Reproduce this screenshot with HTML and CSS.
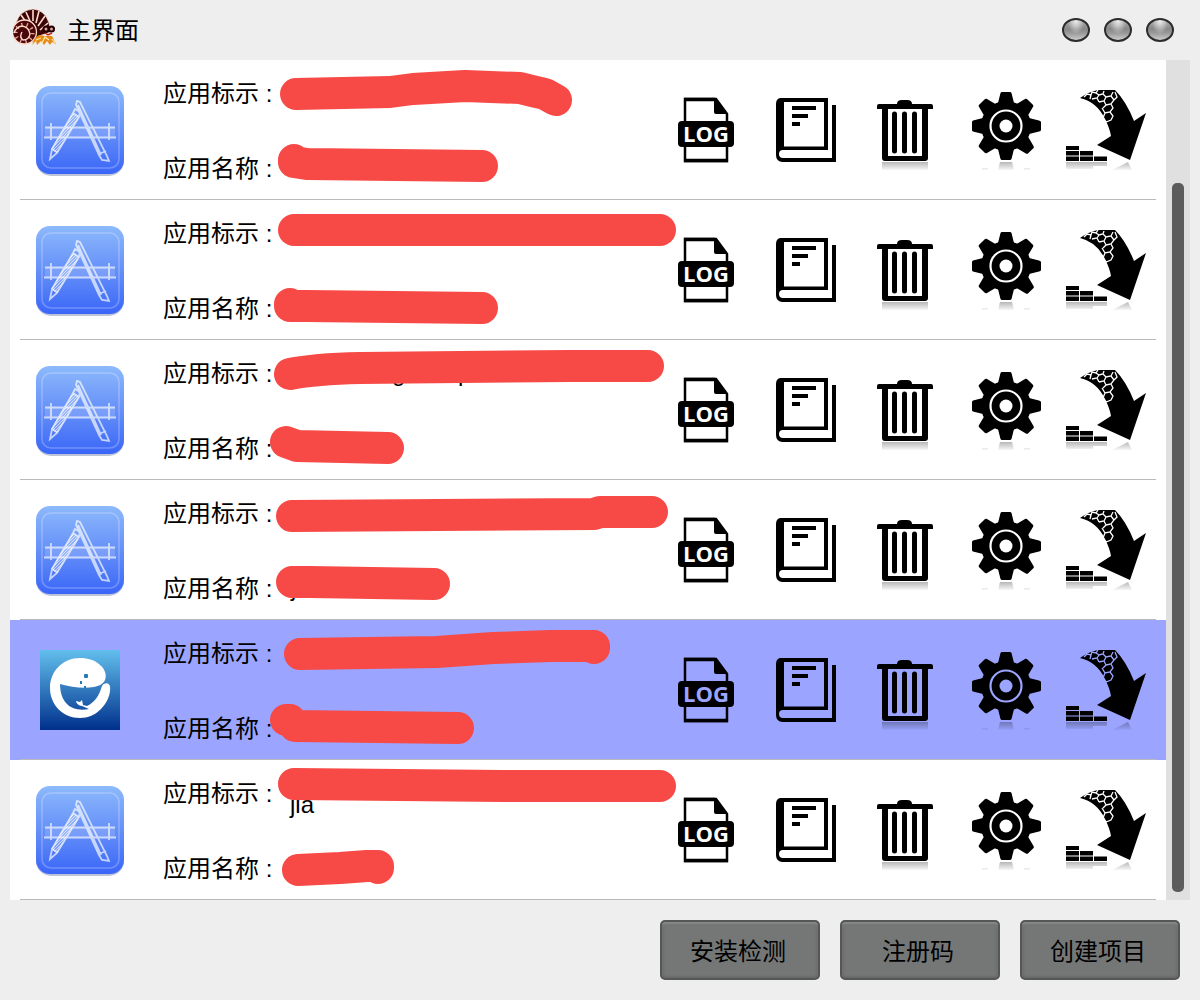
FILE: index.html
```html
<!DOCTYPE html>
<html lang="zh-CN">
<head>
<meta charset="utf-8">
<meta name="viewport" content="width=device-width, initial-scale=1">
<title>主界面</title>
<link rel="stylesheet" href="styles.css">
</head>
<body>
<svg class="sprite" aria-hidden="true">
  <defs>
    <linearGradient id="blueprint" x1="0" y1="0" x2="0" y2="1">
      <stop offset="0" stop-color="#8db9fc"/><stop offset=".5" stop-color="#6590f8"/><stop offset="1" stop-color="#3a66f8"/>
    </linearGradient>
    <linearGradient id="ocean" x1="0" y1="0" x2="0" y2="1">
      <stop offset="0" stop-color="#62bfec"/><stop offset="1" stop-color="#00308c"/>
    </linearGradient>
    <linearGradient id="fade" x1="0" y1="0" x2="0" y2="1">
      <stop offset="0" stop-color="#000" stop-opacity=".28"/><stop offset="1" stop-color="#000" stop-opacity=".03"/>
    </linearGradient>
    <pattern id="hatch" width="3" height="3" patternUnits="userSpaceOnUse">
      <path d="M0 3L3 0" stroke="#fff" stroke-width="1"/>
    </pattern>
  </defs>
  <symbol id="app" viewBox="0 0 100 100">
    <rect x="6" y="7" width="88" height="89" rx="15" fill="#5a6b9c" opacity=".4"/>
    <rect x="6" y="6" width="88" height="88" rx="14" fill="url(#blueprint)"/>
    <rect x="12" y="13" width="77" height="75" rx="9" fill="none" stroke="#fff" stroke-width="1.5" opacity=".25"/>
    <path d="M15 48H85V57H15Z" fill="#fff" opacity=".15"/>
    <g fill="none" stroke="#fff" stroke-width="1.800" opacity=".68">
      <path d="M15 47.500H85M14 57.500H86M21 43V60M79 43V60"/>
      <path d="M46 25l1-4 3 1 27 54 2 5-7-1-3-5zM48 25l23 50M69 74l7-3"/>
      <path d="M43 33l6 4-22 36-7 6 2-10zM43 33l2-4 5 3-1 5M22 69l6 4"/>
    </g>
    <path d="M43 33l6 4-22 36-6-4z" fill="#fff" opacity=".25"/>
    <path d="M43 33l6 4-22 36-6-4z" fill="url(#hatch)" opacity=".6"/>
  </symbol>
  <symbol id="whale" viewBox="0 0 100 100">
    <rect x="10" y="10" width="80" height="80" fill="url(#ocean)"/>
    <g transform="translate(10 10)">
      <path fill="#fff" d="M40 8C48 8 55 10 60 15C65 19 67 25 65 30C63 34 59 36 54 37C43 39 31 37 20 34C20 43 23 54 33 58C38 60 44 60 49 59L42 56C39 56 36 53 36 51L40 52L42 50L43 55L47 56C55 52 59 46 62 36C64 33 68 32 70 36C71 44 67 53 61 59C55 65 48 68 40 68C23 68 10 55 10 38C10 21 23 8 40 8Z"/>
      <rect x="44" y="24" width="4" height="4" rx="1" fill="#277ab8"/><rect x="40" y="31" width="2" height="3" fill="#277ab8"/><rect x="44" y="36" width="2" height="2" fill="#277ab8"/>
    </g>
  </symbol>
  <symbol id="log" viewBox="0 0 80 80">
    <path d="M19 71V9H50L61 24V71Z" fill="none" stroke="#000" stroke-width="2.500"/>
    <path d="M18 9.500H49M18 70.500H62" stroke="#000" stroke-width="3.500"/>
    <path d="M48 8L62 24H50Q48 24 48 22Z"/>
    <rect x="12" y="31" width="56" height="26" rx="4"/>
  </symbol>
  <symbol id="book" viewBox="0 0 80 80">
    <path fill-rule="evenodd" d="M14 8H62V60H17Q13 60 13 64Q13 68 17 68H66V15H70V72H16Q10 71 10 65V14Q10 9 14 8ZM18 12V56.500H58V12Z"/>
    <path d="M26 18H50M26 26H42M26 34H34" stroke="#000" stroke-width="4"/>
  </symbol>
  <symbol id="trash" viewBox="0 0 80 80">
    <path fill-rule="evenodd" d="M31 14Q31 10 36 10H41Q46 10 46 14H65Q67 14 67 16V19H62V68Q62 71 59 71H19Q16 71 16 68V19H11V16Q11 14 13 14ZM22 19V66H56V19Z"/>
    <path d="M28.500 24V61M38.500 24V61M48.500 24V61" stroke="#000" stroke-width="5" stroke-linecap="round"/>
    <path d="M16 72H62V80H16Z" fill="url(#fade)"/>
  </symbol>
  <symbol id="gear" viewBox="0 0 80 80">
    <circle cx="40" cy="36" r="25"/>
    <path id="teeth" d="M32 13L34.500 3Q35 2 36 2H44Q45 2 45.500 3L48 13V59L45.500 69Q45 70 44 70H36Q35 70 34.500 69L32 59ZM17 28L7 30.500Q6 31 6 32V40Q6 41 7 41.500L17 44H63L73 41.500Q75 41 75 40V32Q75 31 73 30.500L63 28Z"/>
    <use href="#teeth" transform="rotate(45 40 36)"/>
    <circle cx="40" cy="36" r="15.500" fill="none" class="cut-line" stroke-width="2.200"/>
    <circle cx="40" cy="36" r="6.500" class="cut-fill"/>
    <path d="M34 72H46L48 80H32ZM16 78h6v2h-6zM58 78h6v2h-6z" fill="url(#fade)"/>
  </symbol>
  <symbol id="arrow" viewBox="0 0 80 80">
    <path d="M14 8Q22 2 32 0H49Q60 11 68 31L80 23L64 70L31 55L45 46Q44 39 39 29Q31 12 14 8Z"/>
    <g fill="none" class="cut-line" stroke-width="1.300">
      <path d="M18 7l3-3 4 1 1-3 4 1 2-3M25 5l-1 4M30 3l3 2 4-1 1-3M33 5l-2 3-5 1M31 8l2 4M37 4l3 3 5-1 2-4M40 7l-2 4-5 1M38 11l2 4-3 3M45 6l3 4-3 4-5 1M45 14l2 4-3 4-5 1-3-5M48 10l3-3-2-5M44 22l3 4-2 4-5 2-3-4 2-5"/>
    </g>
    <path d="M0 56H13V60H0ZM0 61H13V65.500H0ZM14 61H27V65.500H14ZM0 66.500H13V71H0ZM14 66.500H27V71H14ZM28 66.500H41V71H28Z"/>
    <path d="M0 72H41V76H27V79H0ZM62 72L66 80H46Z" fill="url(#fade)"/>
  </symbol>
</svg>

<div class="window">
  <header class="titlebar">
    <svg class="logo" viewBox="0 0 44 38" aria-hidden="true">
      <path d="M3 14Q7 1 20 0Q32 1 36 14L38 23L26 27L20 33L4 33Z" fill="#3c0507" stroke="#ffe3d2" stroke-width=".8"/>
      <path d="M8 6L13 13M13 3L17 12M20 1L20 12M26 2L23 14M32 7L25 17M35 14L27 21" stroke="#ffdccb" stroke-width="1.600"/>
      <circle cx="11.500" cy="23" r="12" fill="#4a0709" stroke="#ffd9cc" stroke-width="1.300"/>
      <circle cx="11" cy="24" r="8.500" fill="none" stroke="#e9a391" stroke-width="4" stroke-dasharray="1.300 4"/>
      <path d="M9 23Q6 28 10 31Q16 31 17 25Q16 18 9 17Q3 18 1 24" fill="none" stroke="#ffd9cc" stroke-width="1.400"/>
      <path d="M19 36L22 29L26 26L32 27L39 27L43 35L39 33L37 36L34 32L31 36L28 32L24 36L23 32Z" fill="#e68a16"/>
      <path d="M23 31L28 29M29 34L32 28L36 31M39 30L42 34" fill="none" stroke="#ffe9a8" stroke-width="1.200"/>
      <circle cx="33" cy="20" r="3.500" fill="#200"/><circle cx="38.500" cy="20" r="3.500" fill="#200"/>
      <circle cx="33" cy="20" r="1.500" fill="#e5a09a"/><circle cx="38.500" cy="20" r="1.500" fill="#e5a09a"/>
      <path d="M32 24L35 26L39 24" fill="none" stroke="#c5281c" stroke-width="1.500"/>
    </svg>
    <h1 class="title">主界面</h1>
    <div class="controls">
      <button class="orb" type="button" aria-label="最小化"></button>
      <button class="orb" type="button" aria-label="最大化"></button>
      <button class="orb" type="button" aria-label="关闭"></button>
    </div>
  </header>

  <main class="content">
    <ul class="list">
      <li class="row">
        <svg class="app-icon" aria-hidden="true"><use href="#app"/></svg>
        <div class="info"><p>应用标示 :</p><p>应用名称 :</p></div>
        <svg class="marker" viewBox="0 0 420 140" aria-hidden="true">
          <path d="M26 34L120 32L143 29L195 26L250 28L262 31L275 34L284 39L286 40"/>
          <path d="M24 100V102L37 104L212 106"/>
        </svg>
        <div class="actions">
          <button type="button" aria-label="日志"><svg><use href="#log"/><text x="40" y="52">LOG</text></svg></button>
          <button type="button" aria-label="文档"><svg><use href="#book"/></svg></button>
          <button type="button" aria-label="删除"><svg><use href="#trash"/></svg></button>
          <button type="button" aria-label="设置"><svg><use href="#gear"/></svg></button>
          <button type="button" aria-label="安装"><svg><use href="#arrow"/></svg></button>
        </div>
      </li>
      <li class="row">
        <svg class="app-icon" aria-hidden="true"><use href="#app"/></svg>
        <div class="info"><p>应用标示 :</p><p>应用名称 :</p></div>
        <svg class="marker" viewBox="0 0 420 140" aria-hidden="true">
          <path d="M24 30H390"/>
          <path d="M20 104V106L36 106L212 108"/>
        </svg>
        <div class="actions">
          <button type="button" aria-label="日志"><svg><use href="#log"/><text x="40" y="52">LOG</text></svg></button>
          <button type="button" aria-label="文档"><svg><use href="#book"/></svg></button>
          <button type="button" aria-label="删除"><svg><use href="#trash"/></svg></button>
          <button type="button" aria-label="设置"><svg><use href="#gear"/></svg></button>
          <button type="button" aria-label="安装"><svg><use href="#arrow"/></svg></button>
        </div>
      </li>
      <li class="row">
        <svg class="app-icon" aria-hidden="true"><use href="#app"/></svg>
        <div class="info"><p>应用标示 :</p><p>应用名称 :</p></div>
        <svg class="marker" viewBox="0 0 420 140" aria-hidden="true">
          <text x="122" y="41">g</text><text x="188" y="41">p</text>
          <path d="M20 34Q45 29 90 28L300 26H378"/>
          <path d="M16 102L27 106L118 108"/>
        </svg>
        <div class="actions">
          <button type="button" aria-label="日志"><svg><use href="#log"/><text x="40" y="52">LOG</text></svg></button>
          <button type="button" aria-label="文档"><svg><use href="#book"/></svg></button>
          <button type="button" aria-label="删除"><svg><use href="#trash"/></svg></button>
          <button type="button" aria-label="设置"><svg><use href="#gear"/></svg></button>
          <button type="button" aria-label="安装"><svg><use href="#arrow"/></svg></button>
        </div>
      </li>
      <li class="row">
        <svg class="app-icon" aria-hidden="true"><use href="#app"/></svg>
        <div class="info"><p>应用标示 :</p><p>应用名称 :</p></div>
        <svg class="marker" viewBox="0 0 420 140" aria-hidden="true">
          <text x="21" y="116">j</text>
          <path d="M22 36L324 34L330 32H382"/>
          <path d="M22 102H40L164 104"/>
        </svg>
        <div class="actions">
          <button type="button" aria-label="日志"><svg><use href="#log"/><text x="40" y="52">LOG</text></svg></button>
          <button type="button" aria-label="文档"><svg><use href="#book"/></svg></button>
          <button type="button" aria-label="删除"><svg><use href="#trash"/></svg></button>
          <button type="button" aria-label="设置"><svg><use href="#gear"/></svg></button>
          <button type="button" aria-label="安装"><svg><use href="#arrow"/></svg></button>
        </div>
      </li>
      <li class="row selected">
        <svg class="app-icon" aria-hidden="true"><use href="#whale"/></svg>
        <div class="info"><p>应用标示 :</p><p>应用名称 :</p></div>
        <svg class="marker" viewBox="0 0 420 140" aria-hidden="true">
          <text x="202" y="40">g</text>
          <path d="M30 34L167 32L223 28L280 26H324V28"/>
          <path d="M16 100H20L25 106L188 108"/>
        </svg>
        <div class="actions">
          <button type="button" aria-label="日志"><svg><use href="#log"/><text x="40" y="52">LOG</text></svg></button>
          <button type="button" aria-label="文档"><svg><use href="#book"/></svg></button>
          <button type="button" aria-label="删除"><svg><use href="#trash"/></svg></button>
          <button type="button" aria-label="设置"><svg><use href="#gear"/></svg></button>
          <button type="button" aria-label="安装"><svg><use href="#arrow"/></svg></button>
        </div>
      </li>
      <li class="row">
        <svg class="app-icon" aria-hidden="true"><use href="#app"/></svg>
        <div class="info"><p>应用标示 :</p><p>应用名称 :</p></div>
        <svg class="marker" viewBox="0 0 420 140">
          <text x="20" y="53">jia</text>
          <path d="M24 24L233 26H390"/>
          <path d="M28 110L70 108L97 106H108V108"/>
        </svg>
        <div class="actions">
          <button type="button" aria-label="日志"><svg><use href="#log"/><text x="40" y="52">LOG</text></svg></button>
          <button type="button" aria-label="文档"><svg><use href="#book"/></svg></button>
          <button type="button" aria-label="删除"><svg><use href="#trash"/></svg></button>
          <button type="button" aria-label="设置"><svg><use href="#gear"/></svg></button>
          <button type="button" aria-label="安装"><svg><use href="#arrow"/></svg></button>
        </div>
      </li>
    </ul>
    <div class="track"><div class="thumb"></div></div>
  </main>

  <footer class="footer">
    <button class="btn" type="button">安装检测</button>
    <button class="btn" type="button">注册码</button>
    <button class="btn" type="button">创建项目</button>
  </footer>
</div>
</body>
</html>
```
FILE: styles.css
```css
* {
  box-sizing: border-box;
}

body {
  margin: 0;
  background: #eee;
  color: #000;
  font: 24px/32px "Liberation Sans", "Noto Sans CJK SC", sans-serif;
}

button {
  padding: 0;
  border: 0;
  background: none;
  color: inherit;
  font: inherit;
}

.sprite {
  position: absolute;
  width: 0;
  height: 0;
}

.window {
  display: flex;
  flex-direction: column;
  min-height: 100vh;
}

.titlebar {
  display: flex;
  align-items: center;
  height: 60px;
  padding: 0 26px 0 13px;
}

.logo {
  width: 44px;
  height: 38px;
  margin-bottom: 4px;
}

.title {
  margin: 0 auto 0 10px;
  padding-top: 2px;
  font-size: 24px;
  font-weight: 400;
}

.controls {
  display: flex;
  gap: 14px;
}

.orb {
  width: 28px;
  height: 24px;
  border: 2px solid #2c2c2c;
  border-radius: 50%;
  background:
    radial-gradient(ellipse at 50% 0, #eee 0, rgba(238, 238, 238, 0) 50%),
    linear-gradient(#aaa, #888 45%, #999 65%, #ccc);
}

.content {
  display: flex;
  flex: 1;
  padding: 0 10px;
}

.list {
  flex: 1;
  margin: 0;
  padding: 0;
  background: #fff;
  list-style: none;
}

.row {
  --row-bg: #fff;
  position: relative;
  display: flex;
  align-items: center;
  height: 140px;
  padding: 0 20px;
  background:
    linear-gradient(#b9b9b9, #b9b9b9) 10px 100% / calc(100% - 20px) 1px no-repeat,
    var(--row-bg);
}

.selected {
  --row-bg: #9ba5ff;
}

.app-icon {
  flex: none;
  width: 100px;
  height: 100px;
}

.info {
  display: grid;
  flex: 1;
  gap: 43px;
  margin-left: 33px;
  padding-top: 2px;
}

.info p {
  margin: 0;
  white-space: nowrap;
}

.marker {
  position: absolute;
  top: 0;
  left: 260px;
  width: 420px;
  height: 140px;
  pointer-events: none;
}

.marker path {
  fill: none;
  stroke: #f74a46;
  stroke-width: 32px;
  stroke-linecap: round;
  stroke-linejoin: round;
}

.actions {
  display: flex;
  gap: 20px;
}

.actions button,
.actions svg {
  display: block;
  width: 80px;
  height: 80px;
}

.actions text {
  fill: var(--row-bg);
  font: 700 22px "Open Sans", sans-serif;
  text-anchor: middle;
}

.cut-line {
  stroke: var(--row-bg, #fff);
}

.cut-fill {
  fill: var(--row-bg, #fff);
}

.track {
  display: flex;
  flex-direction: column;
  justify-content: flex-end;
  width: 24px;
  padding: 8px 6px;
  background: #e0e0e0;
}

.thumb {
  height: 86%;
  border-radius: 5px;
  background: #5c5c5c;
}

.footer {
  display: flex;
  justify-content: flex-end;
  gap: 20px;
  padding: 20px;
}

.btn {
  width: 160px;
  height: 60px;
  padding: 4px 4px 0 0;
  border: 2px solid #555656;
  border-radius: 5px;
  background: #757776;
  box-shadow: inset 0 2px 2px #8a8b8b, inset 0 0 3px 1px #606161;
}
```
